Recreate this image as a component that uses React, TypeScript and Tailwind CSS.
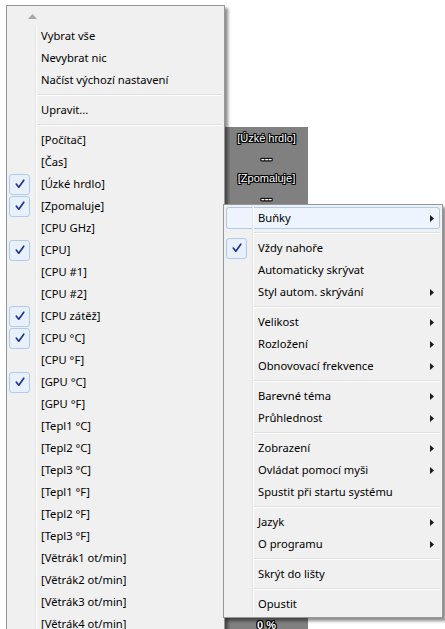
import React from "react";

type Entry =
  | { type: "item"; label: string; checked?: boolean; sub?: boolean; hot?: boolean }
  | { type: "sep" };

const leftItems: Entry[] = [
  { type: "item", label: "Vybrat vše" },
  { type: "item", label: "Nevybrat nic" },
  { type: "item", label: "Načíst výchozí nastavení" },
  { type: "sep" },
  { type: "item", label: "Upravit..." },
  { type: "sep" },
  { type: "item", label: "[Počítač]" },
  { type: "item", label: "[Čas]" },
  { type: "item", label: "[Úzké hrdlo]", checked: true },
  { type: "item", label: "[Zpomaluje]", checked: true },
  { type: "item", label: "[CPU GHz]" },
  { type: "item", label: "[CPU]", checked: true },
  { type: "item", label: "[CPU #1]" },
  { type: "item", label: "[CPU #2]" },
  { type: "item", label: "[CPU zátěž]", checked: true },
  { type: "item", label: "[CPU °C]", checked: true },
  { type: "item", label: "[CPU °F]" },
  { type: "item", label: "[GPU °C]", checked: true },
  { type: "item", label: "[GPU °F]" },
  { type: "item", label: "[Tepl1 °C]" },
  { type: "item", label: "[Tepl2 °C]" },
  { type: "item", label: "[Tepl3 °C]" },
  { type: "item", label: "[Tepl1 °F]" },
  { type: "item", label: "[Tepl2 °F]" },
  { type: "item", label: "[Tepl3 °F]" },
  { type: "item", label: "[Větrák1 ot/min]" },
  { type: "item", label: "[Větrák2 ot/min]" },
  { type: "item", label: "[Větrák3 ot/min]" },
  { type: "item", label: "[Větrák4 ot/min]" },
];

const rightItems: Entry[] = [
  { type: "item", label: "Buňky", sub: true, hot: true },
  { type: "sep" },
  { type: "item", label: "Vždy nahoře", checked: true },
  { type: "item", label: "Automaticky skrývat" },
  { type: "item", label: "Styl autom. skrývání", sub: true },
  { type: "sep" },
  { type: "item", label: "Velikost", sub: true },
  { type: "item", label: "Rozložení", sub: true },
  { type: "item", label: "Obnovovací frekvence", sub: true },
  { type: "sep" },
  { type: "item", label: "Barevné téma", sub: true },
  { type: "item", label: "Průhlednost", sub: true },
  { type: "sep" },
  { type: "item", label: "Zobrazení", sub: true },
  { type: "item", label: "Ovládat pomocí myši", sub: true },
  { type: "item", label: "Spustit při startu systému" },
  { type: "sep" },
  { type: "item", label: "Jazyk", sub: true },
  { type: "item", label: "O programu", sub: true },
  { type: "sep" },
  { type: "item", label: "Skrýt do lišty" },
  { type: "sep" },
  { type: "item", label: "Opustit" },
];

function Check() {
  return (
    <div className="w-[21px] h-[21px] rounded-[3px] border border-[#aecbee] bg-[#e8f0fb] flex items-center justify-center">
      <svg width="10" height="10" viewBox="0 0 10 10">
        <path d="M1.2 5 L3.8 8.2 L8.8 1.2" fill="none" stroke="#1a2f8f" strokeWidth="1.6" strokeLinecap="round" strokeLinejoin="round" />
      </svg>
    </div>
  );
}

function Arrow() {
  return (
    <svg width="4" height="7" viewBox="0 0 4 7">
      <path d="M0 0 L4 3.5 L0 7 Z" fill="#1a1a1a" />
    </svg>
  );
}

function Row({ e }: { e: Entry }) {
  if (e.type === "sep") {
    return (
      <div className="flex h-[8px]">
        <div className="w-[27px] shrink-0 border-r border-[#e2e3e3] shadow-[1px_0_0_#ffffff]" />
        <div className="flex-1 flex items-center pl-[1px]">
          <div className="w-full h-[2px] border-t border-[#e0e0e0] bg-[#ffffff]" />
        </div>
      </div>
    );
  }
  return (
    <div
      className={
        "relative flex h-[22px] " +
        (e.hot ? "rounded-[3px] bg-[#edf4fd] shadow-[inset_0_0_0_1px_#aecbee]" : "")
      }
    >
      <div className="w-[27px] shrink-0 border-r border-[#e2e3e3] shadow-[1px_0_0_#ffffff] flex items-center">
        {e.checked ? <Check /> : null}
      </div>
      <div className="flex-1 flex items-center justify-between pl-[5px] pr-[6px] text-[#000000] whitespace-nowrap">
        <span className="leading-none pb-[1px]">{e.label}</span>
        {e.sub ? <Arrow /> : null}
      </div>
    </div>
  );
}

export default function App() {
  const font = { fontFamily: "'Noto Sans', 'Liberation Sans', sans-serif" };
  return (
    <div className="relative w-[445px] h-[629px] bg-white overflow-hidden text-[11.2px]" style={font}>
      {/* gadget panel behind menus */}
      <div
        className="absolute left-[225px] top-[127px] w-[83px] h-[520px] bg-[#808080] flex flex-col items-center pt-[1px] text-white text-[11px] leading-[20px] [text-shadow:1px_0_0_#000,-1px_0_0_#000,0_1px_0_#000,0_-1px_0_#000,1px_1px_0_#000,-1px_-1px_0_#000,1px_-1px_0_#000,-1px_1px_0_#000]"
        style={{ fontFamily: "'Liberation Sans', sans-serif" }}
      >
        <div>[Úzké hrdlo]</div>
        <div className="font-bold">---</div>
        <div>[Zpomaluje]</div>
        <div className="font-bold">---</div>
        <div className="flex-1" />
        <div className="mb-[12px] font-bold">0 %</div>
      </div>

      {/* left menu */}
      <div className="absolute left-[6px] top-[5px] w-[219px] h-[640px] border border-[#979797] bg-[#f0f0f0] p-[2px] shadow-[3px_3px_3px_rgba(0,0,0,0.45)]">
        <div className="h-[17px] flex items-center pl-[19px]">
          <svg width="9" height="5" viewBox="0 0 9 5">
            <path d="M0 5 L4.5 0 L9 5 Z" fill="#a7a7a7" />
          </svg>
        </div>
        {leftItems.map((e, i) => (
          <Row key={i} e={e} />
        ))}
      </div>

      {/* right menu */}
      <div className="absolute left-[223px] top-[204px] w-[220px] border border-[#979797] bg-[#f0f0f0] p-[2px] shadow-[3px_3px_3px_rgba(0,0,0,0.45)]">
        {rightItems.map((e, i) => (
          <Row key={i} e={e} />
        ))}
      </div>
    </div>
  );
}
